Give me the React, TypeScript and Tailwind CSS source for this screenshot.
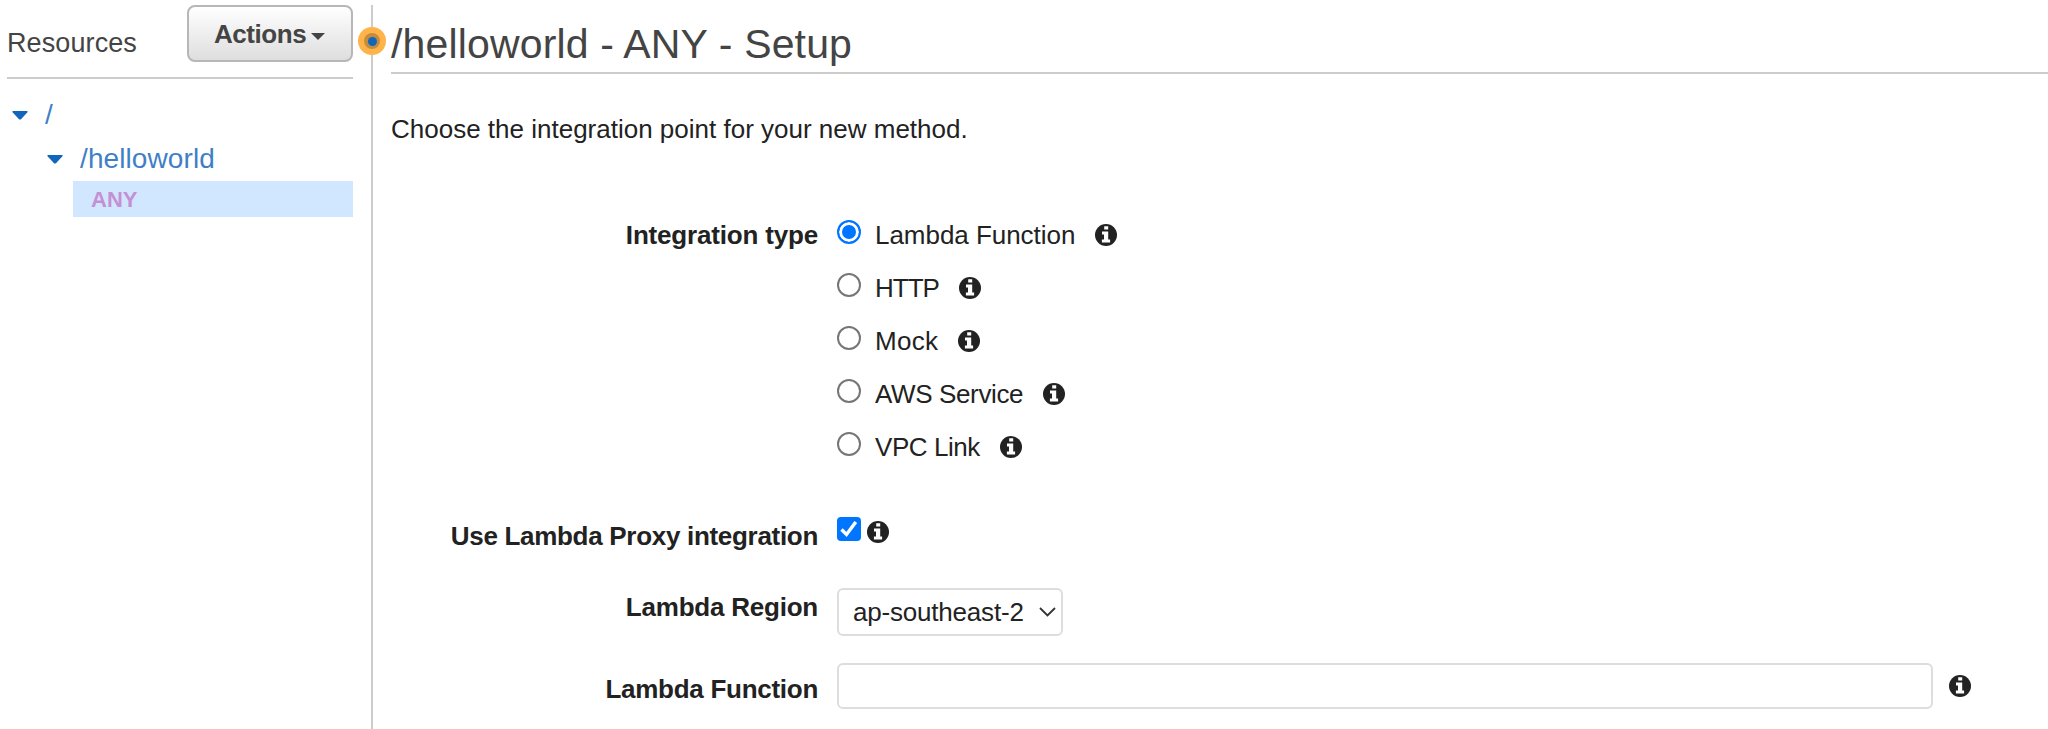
const types = [
  { name: "Lambda Function", fit: "tracking-[-0.04px]" },
  { name: "HTTP", fit: "tracking-[-0.98px]" },
  { name: "Mock", fit: "tracking-[0.3px]" },
  { name: "AWS Service", fit: "tracking-[-0.36px]" },
  { name: "VPC Link", fit: "tracking-[-0.45px]" },
];

function Info({ className = "" }: { className?: string }) {
  return (
    <svg className={"size-[22px] shrink-0 " + className} viewBox="0 0 22 22">
      <circle cx="11" cy="11" r="11" fill="#222" />
      <path d="M9.200 2.300H13.200V5.600H9.200ZM7 7.400H13.200V15.400H15.100V18.400H6.900V15.400H9V10.400H7Z" fill="#fff" />
    </svg>
  );
}

function TreeCaret() {
  return (
    <svg className="h-[9px] w-[16px] shrink-0" viewBox="0 0 16 9" fill="#1166bb">
      <path d="M1 0H15Q16.200 .3 15.200 1.400L9 8.200Q8 9 7 8.200L.8 1.400Q-.2.3 1 0Z" />
    </svg>
  );
}

export default function App() {
  return (
    <div className="flex h-[729px] w-full overflow-hidden bg-white font-['Liberation_Sans',Arial,sans-serif] text-[26px] leading-[30px] text-[#222]">
      <aside className="w-[371px] shrink-0 pl-[7px] pr-[18px]">
        <div className="flex h-[79px] items-start justify-between border-b-2 border-[#ccc]">
          <h2 className="mt-[28px] whitespace-nowrap text-[27px] tracking-[0.1px] text-[#444]">Resources</h2>
          <button className="mt-[5px] flex h-[57px] w-[166px] items-start rounded-[8px] border-2 border-[#b7b7b7] bg-linear-to-b from-white to-[#dedede] pl-[25px] pt-[12px] font-bold text-[#444]">
            <span className="tracking-[-0.45px]">Actions</span>
            <svg className="ml-[5px] mt-[14px] h-[7px] w-[14px] shrink-0" viewBox="0 0 14 7" fill="#444">
              <path d="M0 0H14L7 7Z" />
            </svg>
          </button>
        </div>
        <div className="mt-[21px] flex h-[30px] items-center pl-[5px] text-[28px] text-[#3f7fc7]">
          <TreeCaret />
          <span className="ml-[17px]">/</span>
        </div>
        <div className="mt-[14px] flex h-[30px] items-center pl-[40px] text-[28px] text-[#3f7fc7]">
          <TreeCaret />
          <span className="ml-[17px] tracking-[0.1px]">/helloworld</span>
        </div>
        <div className="ml-[66px] mt-[7px] flex h-[36px] items-center bg-[#d1e7ff] pl-[18px] pt-px text-[22px] font-bold text-[#c58fd6]">
          <span>ANY</span>
        </div>
      </aside>
      <div className="relative mt-[5px] w-[2px] shrink-0 bg-[#ccc]">
        <div className="absolute left-[-13px] top-[22px] flex size-[28px] items-center justify-center rounded-full bg-[#ffb349]">
          <div className="flex size-[16px] items-center justify-center rounded-full bg-[#c48c3e]">
            <div className="size-[9px] rounded-full bg-[#1166bb]" />
          </div>
        </div>
      </div>
      <main className="min-w-0 grow pl-[18px]">
        <h1 className="flex h-[74px] border-b-2 border-[#ccc] pt-[21px] text-[41px] leading-[46px] tracking-[0.15px] text-[#444]">
          <span>/helloworld - ANY - Setup</span>
        </h1>
        <p className="mt-[40px] h-[30px]">
          <span>Choose the integration point for your new method.</span>
        </p>
        <div className="mt-[76px] flex">
          <div className="w-[427px] shrink-0 text-right font-bold tracking-[-0.18px]">
            <span>Integration type</span>
          </div>
          <div className="ml-[19px] flex flex-col gap-[23px]">
            {types.map((t, i) => (
              <label key={t.name} className="flex h-[30px] items-start">
                <input
                  type="radio"
                  name="integration"
                  defaultChecked={i === 0}
                  className="size-[24px] shrink-0 appearance-none rounded-full border-2 border-[#767676] bg-white checked:border-[#0075ff] checked:bg-[#0075ff] checked:shadow-[inset_0_0_0_3px_#fff]"
                />
                <span className={"ml-[14px] whitespace-nowrap " + t.fit}>{t.name}</span>
                <Info className="ml-[20px] mt-[4px]" />
              </label>
            ))}
          </div>
        </div>
        <div className="mt-[49px] flex h-[54px]">
          <div className="mt-[10px] w-[427px] shrink-0 text-right font-bold tracking-[-0.3px]">
            <span>Use Lambda Proxy integration</span>
          </div>
          <div className="ml-[19px] mt-[6px] flex size-[24px] shrink-0 items-center justify-center rounded-[4px] bg-[#0075ff]">
            <svg className="size-[24px]" viewBox="0 0 24 24" fill="none" stroke="#fff" strokeWidth="3.400">
              <path d="M4.500 12.500L9.500 17.500L18.800 5" />
            </svg>
          </div>
          <Info className="ml-[6px] mt-[10px]" />
        </div>
        <div className="mt-[23px] flex h-[48px]">
          <div className="mt-[4px] w-[427px] shrink-0 text-right font-bold tracking-[-0.22px]">
            <span>Lambda Region</span>
          </div>
          <div className="ml-[19px] flex w-[226px] items-center rounded-[6px] border-2 border-[#ddd] pl-[14px]">
            <span className="whitespace-nowrap tracking-[-0.2px]">ap-southeast-2</span>
            <svg className="ml-auto mr-[5px] h-[10px] w-[17px] shrink-0" viewBox="0 0 17 10" fill="none" stroke="#333" strokeWidth="1.800">
              <path d="M1 1L8.500 8.500L16 1" />
            </svg>
          </div>
        </div>
        <div className="mt-[27px] flex h-[46px]">
          <div className="mt-[11px] w-[427px] shrink-0 text-right font-bold tracking-[-0.27px]">
            <span>Lambda Function</span>
          </div>
          <input className="ml-[19px] w-[1096px] shrink-0 rounded-[6px] border-2 border-[#ddd] bg-white px-3" />
          <Info className="ml-[16px] mt-[12px]" />
        </div>
      </main>
    </div>
  );
}
